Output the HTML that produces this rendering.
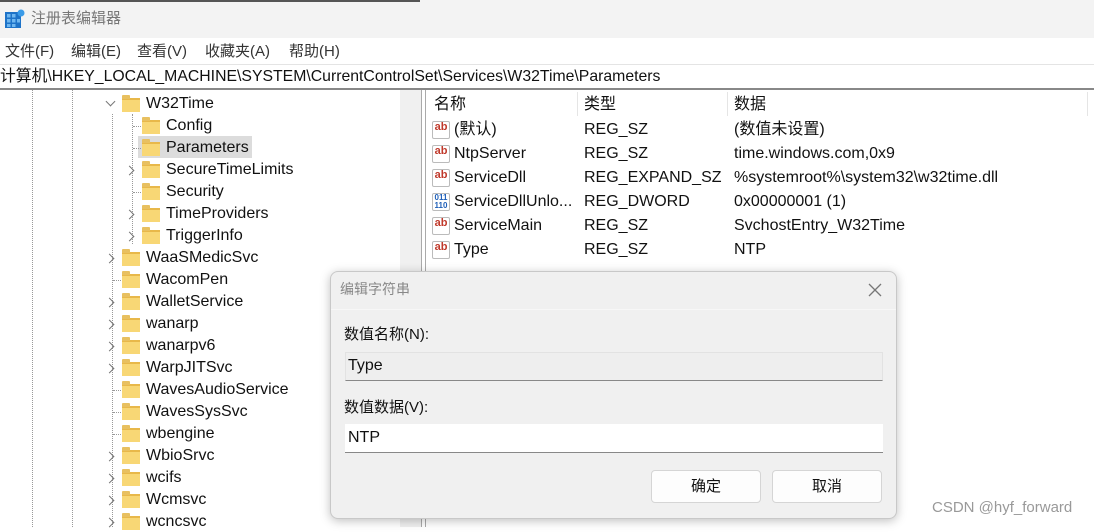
<!DOCTYPE html>
<html><head><meta charset="utf-8"><style>
*{margin:0;padding:0;box-sizing:border-box}
body{width:1094px;height:527px;overflow:hidden;background:#fff;font-family:"Liberation Sans","Microsoft YaHei","Noto Sans CJK SC",sans-serif;font-size:16px;color:#111;position:relative}
.a{position:absolute;white-space:nowrap;line-height:20px}
.fold{position:absolute;width:18px;height:14px;background:#f8d775;border-top:2px solid #e8b84a}
.fold:before{content:"";position:absolute;left:0;top:-5px;width:8px;height:4px;background:#e8c060;border-radius:1px 1px 0 0}
.chev{position:absolute;width:7px;height:7px;border-right:1.3px solid #777;border-bottom:1.3px solid #777;transform:rotate(-45deg)}
.vd{position:absolute;width:0;border-left:1px dotted #999}
.hd{position:absolute;height:0;width:8px;border-top:1px dotted #999}
.ab{position:absolute;width:18px;height:18px;background:#fff;border:1px solid #bbb;border-radius:2px;font:bold 11px "Liberation Sans",sans-serif;color:#c0392b;line-height:11px;text-align:center}
</style></head><body>
<div class="a" style="left:0;top:0;width:1094px;height:38px;background:#f3f3f3"></div>
<div class="a" style="left:0;top:0;width:420px;height:2px;background:#555"></div>
<svg class="a" style="left:5px;top:9px" width="20" height="20"><rect x="0" y="3" width="16" height="16" fill="#1e73c8"/><g fill="#6fb7f0"><rect x="2" y="5" width="3.5" height="3.5"/><rect x="7" y="5" width="3.5" height="3.5"/><rect x="2" y="10" width="3.5" height="3.5"/><rect x="7" y="10" width="3.5" height="3.5"/><rect x="12" y="10" width="3" height="3.5"/><rect x="2" y="15" width="3.5" height="3"/><rect x="7" y="15" width="3.5" height="3"/></g><circle cx="16" cy="4" r="3.5" fill="#3a9be8"/></svg>
<div class="a" style="left:31px;top:9px;color:#777;font-size:15px">注册表编辑器</div>
<div class="a" style="left:5px;top:42px;color:#333;font-size:15px">文件(F)</div>
<div class="a" style="left:71px;top:42px;color:#333;font-size:15px">编辑(E)</div>
<div class="a" style="left:137px;top:42px;color:#333;font-size:15px">查看(V)</div>
<div class="a" style="left:205px;top:42px;color:#333;font-size:15px">收藏夹(A)</div>
<div class="a" style="left:289px;top:42px;color:#333;font-size:15px">帮助(H)</div>
<div class="a" style="left:0;top:64px;width:1094px;height:1px;background:#e4e4e4"></div>
<div class="a" style="left:0;top:67px;font-size:15.8px">计算机\HKEY_LOCAL_MACHINE\SYSTEM\CurrentControlSet\Services\W32Time\Parameters</div>
<div class="a" style="left:0;top:88px;width:1094px;height:2px;background:#888"></div>
<!-- tree -->
<div class="vd" style="left:32px;top:90px;height:437px"></div>
<div class="vd" style="left:72px;top:90px;height:437px"></div>
<div class="vd" style="left:112px;top:114px;height:413px"></div>
<div class="vd" style="left:132px;top:114px;height:130px"></div>
<div class="a" style="left:400px;top:90px;width:21px;height:437px;background:#f0f0f0"></div>
<div class="a" style="left:421px;top:90px;width:5px;height:437px;background:#fff;border-left:1px solid #aaa;border-right:1px solid #aaa"></div>
<div class="chev" style="left:107px;top:98px;transform:rotate(45deg)"></div>
<div class="fold" style="left:122px;top:98px"></div><div class="a" style="left:146px;top:94px">W32Time</div>
<div class="a" style="left:138px;top:136px;width:114px;height:22px;background:#dcdcdc"></div>
<div class="hd" style="left:133px;top:126px"></div><div class="fold" style="left:142px;top:120px"></div><div class="a" style="left:166px;top:116px">Config</div>
<div class="hd" style="left:133px;top:148px"></div><div class="fold" style="left:142px;top:142px"></div><div class="a" style="left:166px;top:138px">Parameters</div>
<div class="chev" style="left:126px;top:167px"></div><div class="fold" style="left:142px;top:164px"></div><div class="a" style="left:166px;top:160px">SecureTimeLimits</div>
<div class="hd" style="left:133px;top:192px"></div><div class="fold" style="left:142px;top:186px"></div><div class="a" style="left:166px;top:182px">Security</div>
<div class="chev" style="left:126px;top:211px"></div><div class="fold" style="left:142px;top:208px"></div><div class="a" style="left:166px;top:204px">TimeProviders</div>
<div class="chev" style="left:126px;top:233px"></div><div class="fold" style="left:142px;top:230px"></div><div class="a" style="left:166px;top:226px">TriggerInfo</div>
<div class="chev" style="left:106px;top:255px"></div><div class="fold" style="left:122px;top:252px"></div><div class="a" style="left:146px;top:248px">WaaSMedicSvc</div>
<div class="hd" style="left:113px;top:280px"></div><div class="fold" style="left:122px;top:274px"></div><div class="a" style="left:146px;top:270px">WacomPen</div>
<div class="chev" style="left:106px;top:299px"></div><div class="fold" style="left:122px;top:296px"></div><div class="a" style="left:146px;top:292px">WalletService</div>
<div class="chev" style="left:106px;top:321px"></div><div class="fold" style="left:122px;top:318px"></div><div class="a" style="left:146px;top:314px">wanarp</div>
<div class="chev" style="left:106px;top:343px"></div><div class="fold" style="left:122px;top:340px"></div><div class="a" style="left:146px;top:336px">wanarpv6</div>
<div class="chev" style="left:106px;top:365px"></div><div class="fold" style="left:122px;top:362px"></div><div class="a" style="left:146px;top:358px">WarpJITSvc</div>
<div class="hd" style="left:113px;top:390px"></div><div class="fold" style="left:122px;top:384px"></div><div class="a" style="left:146px;top:380px">WavesAudioService</div>
<div class="hd" style="left:113px;top:412px"></div><div class="fold" style="left:122px;top:406px"></div><div class="a" style="left:146px;top:402px">WavesSysSvc</div>
<div class="hd" style="left:113px;top:434px"></div><div class="fold" style="left:122px;top:428px"></div><div class="a" style="left:146px;top:424px">wbengine</div>
<div class="chev" style="left:106px;top:453px"></div><div class="fold" style="left:122px;top:450px"></div><div class="a" style="left:146px;top:446px">WbioSrvc</div>
<div class="chev" style="left:106px;top:475px"></div><div class="fold" style="left:122px;top:472px"></div><div class="a" style="left:146px;top:468px">wcifs</div>
<div class="chev" style="left:106px;top:497px"></div><div class="fold" style="left:122px;top:494px"></div><div class="a" style="left:146px;top:490px">Wcmsvc</div>
<div class="chev" style="left:106px;top:519px"></div><div class="fold" style="left:122px;top:516px"></div><div class="a" style="left:146px;top:512px">wcncsvc</div>
<!-- list -->
<div class="a" style="left:577px;top:92px;width:1px;height:24px;background:#e5e5e5"></div>
<div class="a" style="left:727px;top:92px;width:1px;height:24px;background:#e5e5e5"></div>
<div class="a" style="left:1087px;top:92px;width:1px;height:24px;background:#e5e5e5"></div>
<div class="a" style="left:434px;top:95px">名称</div><div class="a" style="left:584px;top:95px">类型</div><div class="a" style="left:734px;top:95px">数据</div>
<div class="ab" style="left:432px;top:121px">ab</div><div class="a" style="left:454px;top:120px">(默认)</div><div class="a" style="left:584px;top:120px">REG_SZ</div><div class="a" style="left:734px;top:120px">(数值未设置)</div>
<div class="ab" style="left:432px;top:145px">ab</div><div class="a" style="left:454px;top:144px">NtpServer</div><div class="a" style="left:584px;top:144px">REG_SZ</div><div class="a" style="left:734px;top:144px">time.windows.com,0x9</div>
<div class="ab" style="left:432px;top:169px">ab</div><div class="a" style="left:454px;top:168px">ServiceDll</div><div class="a" style="left:584px;top:168px">REG_EXPAND_SZ</div><div class="a" style="left:734px;top:168px">%systemroot%\system32\w32time.dll</div>
<div class="ab" style="left:432px;top:193px;color:#1e5fb8;font-size:8px;line-height:8px">011<br>110</div><div class="a" style="left:454px;top:192px">ServiceDllUnlo...</div><div class="a" style="left:584px;top:192px">REG_DWORD</div><div class="a" style="left:734px;top:192px">0x00000001 (1)</div>
<div class="ab" style="left:432px;top:217px">ab</div><div class="a" style="left:454px;top:216px">ServiceMain</div><div class="a" style="left:584px;top:216px">REG_SZ</div><div class="a" style="left:734px;top:216px">SvchostEntry_W32Time</div>
<div class="ab" style="left:432px;top:241px">ab</div><div class="a" style="left:454px;top:240px">Type</div><div class="a" style="left:584px;top:240px">REG_SZ</div><div class="a" style="left:734px;top:240px">NTP</div>
<!-- dialog -->
<div class="a" style="left:330px;top:271px;width:567px;height:248px;background:#f0f0f0;border:1px solid #c8c8c8;border-radius:8px;box-shadow:0 2px 10px rgba(0,0,0,.25)"></div>
<div class="a" style="left:331px;top:309px;width:565px;height:1px;background:#f7f7f7"></div>
<div class="a" style="left:340px;top:279px;color:#888;font-size:14px">编辑字符串</div>
<svg class="a" style="left:868px;top:283px" width="14" height="14"><path d="M1 1L13 13M13 1L1 13" stroke="#777" stroke-width="1.3"/></svg>
<div class="a" style="left:344px;top:325px;font-size:15px">数值名称(N):</div>
<div class="a" style="left:345px;top:352px;width:538px;height:29px;background:#eee;border:1px solid #e2e2e2;border-bottom:1px solid #888"></div>
<div class="a" style="left:348px;top:356px">Type</div>
<div class="a" style="left:344px;top:398px;font-size:15px">数值数据(V):</div>
<div class="a" style="left:345px;top:424px;width:538px;height:29px;background:#fff;border-bottom:1px solid #888"></div>
<div class="a" style="left:348px;top:428px">NTP</div>
<div class="a" style="left:651px;top:470px;width:110px;height:33px;background:#fdfdfd;border:1px solid #d5d5d5;border-radius:4px;text-align:center;line-height:31px;font-size:15px">确定</div>
<div class="a" style="left:772px;top:470px;width:110px;height:33px;background:#fdfdfd;border:1px solid #d5d5d5;border-radius:4px;text-align:center;line-height:31px;font-size:15px">取消</div>
<div class="a" style="left:932px;top:498px;color:#999;font-size:15px">CSDN @hyf_forward</div>
</body></html>
